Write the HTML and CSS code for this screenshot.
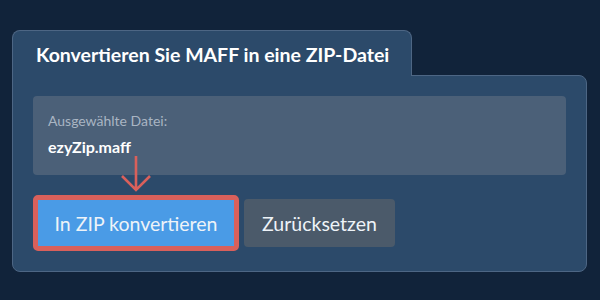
FILE: index.html
```html
<!DOCTYPE html>
<html>
<head>
    <title>MAFF in ZIP konvertieren</title>
    <link rel="stylesheet" href="styles.css">
</head>
<body>
    <main class="converter">
        <h1 class="tab">Konvertieren Sie MAFF in eine ZIP-Datei</h1>
        <section class="card">
            <div class="file-box">
                <p class="file-label">Ausgewählte Datei:</p>
                <p class="file-name">ezyZip.maff</p>
            </div>
            <div class="actions">
                <div class="highlight">
                    <!-- arrow pointing at the main button -->
                    <svg class="pointer" width="32" height="38" viewBox="0 0 32 38">
                        <path d="M16 1 L16 35 M2 21 L16 35 L30 21" fill="none" stroke="#d9605b" stroke-width="2.6"/>
                    </svg>
                    <button class="btn btn-primary">In ZIP konvertieren</button>
                </div>
                <button class="btn btn-reset">Zurücksetzen</button>
            </div>
        </section>
    </main>
</body>
</html>
```

FILE: styles.css
```css
body {
    margin: 0;
    background-color: #11233a;
    font-family: Lato, "Noto Sans", sans-serif;
}
.converter {
    padding: 30px 13px 0 12px;
}
.tab {
    display: inline-block;
    position: relative;
    z-index: 1;
    margin: 0 0 -1px 0;
    padding: 12px 22px 10px 23px;
    background-color: #2c4a6a;
    border: 1px solid #4d6684;
    border-bottom: none;
    border-radius: 8px 8px 0 0;
    color: #ffffff;
    font-size: 19.5px;
    font-weight: bold;
    line-height: 1.2;
}
.card {
    background-color: #2c4a6a;
    border: 1px solid #4d6684;
    border-radius: 0 8px 8px 8px;
    padding: 20px;
}
.file-box {
    background-color: #4b6078;
    border-radius: 4px;
    padding: 14px 15px 16px;
}
.file-label {
    margin: 0 0 4px 0;
    color: #a9b5c3;
    font-size: 14px;
    line-height: 1.5;
}
.file-name {
    margin: 0;
    color: #ffffff;
    font-size: 16px;
    font-weight: bold;
    line-height: 1.5;
}
.actions {
    display: flex;
    align-items: center;
    gap: 5px;
    margin-top: 20px;
}
.highlight {
    position: relative;
    display: flex;
}
.pointer {
    position: absolute;
    bottom: 100%;
    left: 50%;
    margin-bottom: 2px;
    transform: translateX(-50%);
}
.btn {
    border: none;
    border-radius: 4px;
    color: #eef3f8;
    font-family: Lato, "Noto Sans", sans-serif;
    font-size: 19.5px;
    cursor: pointer;
}
.btn-primary {
    width: 206px;
    height: 56px;
    background-color: #4a9be6;
    border: 5px solid #d9605b;
    border-radius: 5px;
}
.btn-reset {
    width: 151px;
    height: 48px;
    background-color: #4b5a6a;
}
```
